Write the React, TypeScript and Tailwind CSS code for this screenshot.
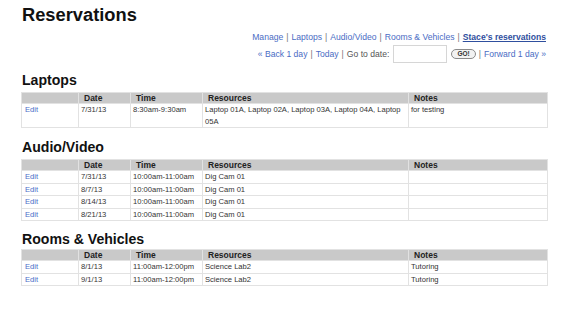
import React from "react";

type Row = { date: string; time: string; resources: string; notes: string };

const laptops: Row[] = [
  { date: "7/31/13", time: "8:30am-9:30am", resources: "Laptop 01A, Laptop 02A, Laptop 03A, Laptop 04A, Laptop 05A", notes: "for testing" },
];

const audio: Row[] = [
  { date: "7/31/13", time: "10:00am-11:00am", resources: "Dig Cam 01", notes: "" },
  { date: "8/7/13", time: "10:00am-11:00am", resources: "Dig Cam 01", notes: "" },
  { date: "8/14/13", time: "10:00am-11:00am", resources: "Dig Cam 01", notes: "" },
  { date: "8/21/13", time: "10:00am-11:00am", resources: "Dig Cam 01", notes: "" },
];

const rooms: Row[] = [
  { date: "8/1/13", time: "11:00am-12:00pm", resources: "Science Lab2", notes: "Tutoring" },
  { date: "9/1/13", time: "11:00am-12:00pm", resources: "Science Lab2", notes: "Tutoring" },
];

function Sep() {
  return <span className="text-[#777] mx-[3px]">|</span>;
}

function Tabla({ rows }: { rows: Row[] }) {
  const th = "bg-[#c9c9c9] border border-[#e2e2e2] text-left font-bold text-[8.5px] text-[#222] pl-[5px] h-[11px] leading-[10px] align-middle";
  const td = "border border-[#e2e2e2] px-[2px] text-[7.6px] leading-[11.5px] text-[#333] align-top";
  return (
    <table className="w-[526px] border-collapse table-fixed">
      <colgroup>
        <col className="w-[57px]" />
        <col className="w-[52px]" />
        <col className="w-[72px]" />
        <col className="w-[206px]" />
        <col className="w-[139px]" />
      </colgroup>
      <thead>
        <tr>
          <th className={th}></th>
          <th className={th}>Date</th>
          <th className={th}>Time</th>
          <th className={th}>Resources</th>
          <th className={th}>Notes</th>
        </tr>
      </thead>
      <tbody>
        {rows.map((r, i) => (
          <tr key={i}>
            <td className={td}>
              <a className="text-[#4a6cc8] pl-[1px]">Edit</a>
            </td>
            <td className={td}>{r.date}</td>
            <td className={td}>{r.time}</td>
            <td className={td}>{r.resources}</td>
            <td className={td}>{r.notes}</td>
          </tr>
        ))}
      </tbody>
    </table>
  );
}

export default function App() {
  return (
    <div className="w-[568px] h-[320px] bg-white px-[21px] pt-[4px] font-['Liberation_Sans',Arial,sans-serif]">
      <h1 className="text-[18.3px] leading-[22px] font-bold text-[#111] pl-[1px]">Reservations</h1>

      {/* Navegacion */}
      <div className="flex flex-col items-end pr-[1px] text-[8.6px] text-[#4a6cc4] mt-[6px]">
        <div className="leading-[11px]">
          <a>Manage</a>
          <Sep />
          <a>Laptops</a>
          <Sep />
          <a>Audio/Video</a>
          <Sep />
          <a>Rooms &amp; Vehicles</a>
          <Sep />
          <a className="font-bold underline text-[#2f4f9e]">Stace's reservations</a>
        </div>
        <div className="flex items-center mt-[2px] h-[18px]">
          <a>« Back 1 day</a>
          <Sep />
          <a>Today</a>
          <Sep />
          <span className="text-[#555]">Go to date:</span>
          <input className="ml-[4px] w-[54px] h-[18px] border border-[#d6d6d6] bg-white" />
          <button className="ml-[4px] h-[10px] px-[5px] rounded-full border border-[#8a8a8a] bg-[#f2f2f2] text-[6.5px] leading-[8px] font-bold text-[#333]">
            GO!
          </button>
          <Sep />
          <a>Forward 1 day »</a>
        </div>
      </div>

      <h2 className="text-[14.1px] leading-[17px] font-bold text-[#111] mt-[9px] pl-[1px]">Laptops</h2>
      <div className="mt-[3px]">
        <Tabla rows={laptops} />
      </div>

      <h2 className="text-[14.1px] leading-[17px] font-bold text-[#111] mt-[11px] pl-[1px]">Audio/Video</h2>
      <div className="mt-[3px]">
        <Tabla rows={audio} />
      </div>

      <h2 className="text-[14.1px] leading-[17px] font-bold text-[#111] mt-[10px] pl-[1px]">Rooms &amp; Vehicles</h2>
      <div className="mt-[1px]">
        <Tabla rows={rooms} />
      </div>
    </div>
  );
}
